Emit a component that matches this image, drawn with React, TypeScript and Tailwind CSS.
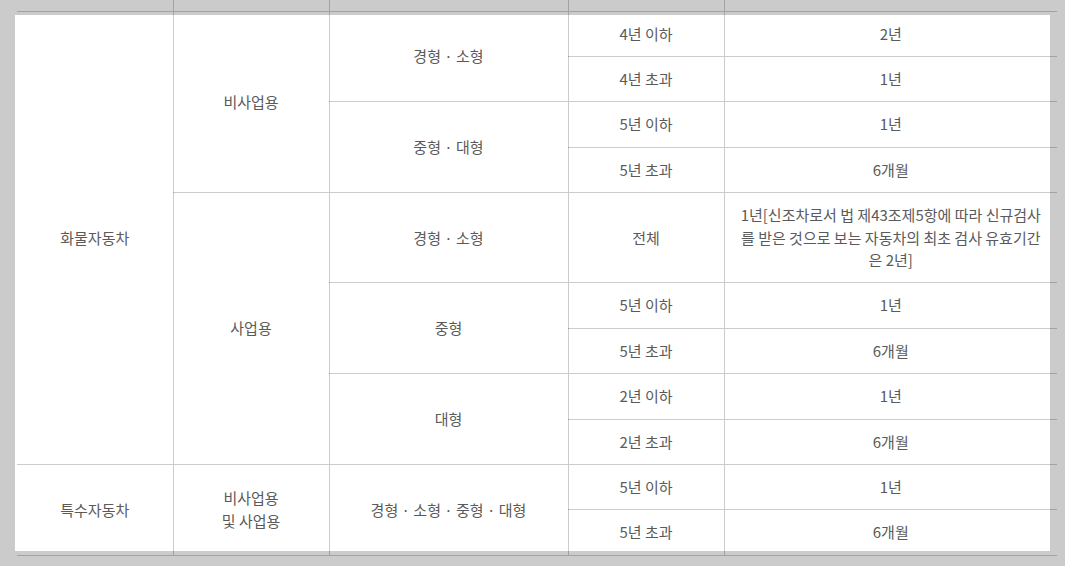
const rows: { cells: { text: string; rowSpan?: number }[] }[] = [
  {
    cells: [
      { text: '화물자동차', rowSpan: 9 },
      { text: '비사업용', rowSpan: 4 },
      { text: '경형 · 소형', rowSpan: 2 },
      { text: '4년 이하' },
      { text: '2년' },
    ],
  },
  { cells: [{ text: '4년 초과' }, { text: '1년' }] },
  {
    cells: [
      { text: '중형 · 대형', rowSpan: 2 },
      { text: '5년 이하' },
      { text: '1년' },
    ],
  },
  { cells: [{ text: '5년 초과' }, { text: '6개월' }] },
  {
    cells: [
      { text: '사업용', rowSpan: 5 },
      { text: '경형 · 소형' },
      { text: '전체' },
      {
        text: '1년[신조차로서 법 제43조제5항에 따라 신규검사를 받은 것으로 보는 자동차의 최초 검사 유효기간은 2년]',
      },
    ],
  },
  {
    cells: [
      { text: '중형', rowSpan: 2 },
      { text: '5년 이하' },
      { text: '1년' },
    ],
  },
  { cells: [{ text: '5년 초과' }, { text: '6개월' }] },
  {
    cells: [
      { text: '대형', rowSpan: 2 },
      { text: '2년 이하' },
      { text: '1년' },
    ],
  },
  { cells: [{ text: '2년 초과' }, { text: '6개월' }] },
  {
    cells: [
      { text: '특수자동차', rowSpan: 2 },
      { text: '비사업용\n및 사업용', rowSpan: 2 },
      { text: '경형 · 소형 · 중형 · 대형', rowSpan: 2 },
      { text: '5년 이하' },
      { text: '1년' },
    ],
  },
  { cells: [{ text: '5년 초과' }, { text: '6개월' }] },
]

export default function App() {
  return (
    <div
      className="h-[566px] overflow-hidden bg-[#cbcbcb] pt-[15px] pl-[15px]"
      style={{ fontFamily: '"Noto Sans CJK KR", "Noto Sans", sans-serif' }}
    >
      <div className="flow-root h-[536px] w-[1035px] bg-white">
        <table className="-mt-[15px] ml-[2px] w-[1040px] table-fixed border-collapse text-[15px] leading-[22.4px] text-[#5a5a5a]">
          <colgroup>
            <col className="w-[156px]" />
            <col className="w-[156px]" />
            <col className="w-[239px]" />
            <col className="w-[156px]" />
            <col className="w-[333px]" />
          </colgroup>
          <tbody>
            <tr className="h-[11px]">
              <td className="border-b border-black/20 p-0" />
              <td className="border-b border-l border-black/20 p-0" />
              <td className="border-b border-l border-black/20 p-0" />
              <td className="border-b border-l border-black/20 p-0" />
              <td className="border-b border-l border-black/20 p-0" />
            </tr>
            {rows.map((row, i) => (
              <tr key={i}>
                {row.cells.map((c, j) => {
                  const first = i === 0 || i === 9 ? j === 0 : false
                  return (
                    <td
                      key={j}
                      rowSpan={c.rowSpan}
                      className={
                        'whitespace-pre-line border-b border-black/20 px-[12px] py-[11px] text-center align-middle ' +
                        (first ? '' : 'border-l')
                      }
                    >
                      {c.text}
                    </td>
                  )
                })}
              </tr>
            ))}
          </tbody>
        </table>
      </div>
    </div>
  )
}
